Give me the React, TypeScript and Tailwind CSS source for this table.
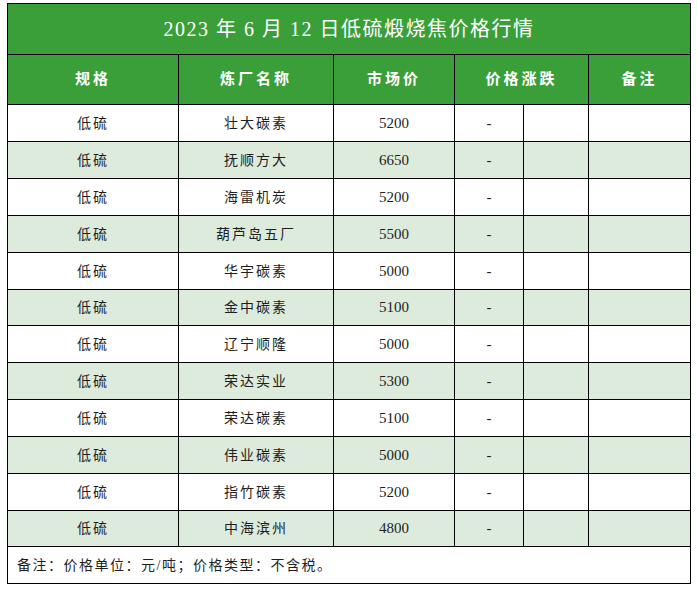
import React from 'react';

interface Row {
  spec: string;
  plant: string;
  price: string;
}

const rows: Row[] = [
  { spec: '低硫', plant: '壮大碳素', price: '5200' },
  { spec: '低硫', plant: '抚顺方大', price: '6650' },
  { spec: '低硫', plant: '海雷机炭', price: '5200' },
  { spec: '低硫', plant: '葫芦岛五厂', price: '5500' },
  { spec: '低硫', plant: '华宇碳素', price: '5000' },
  { spec: '低硫', plant: '金中碳素', price: '5100' },
  { spec: '低硫', plant: '辽宁顺隆', price: '5000' },
  { spec: '低硫', plant: '荣达实业', price: '5300' },
  { spec: '低硫', plant: '荣达碳素', price: '5100' },
  { spec: '低硫', plant: '伟业碳素', price: '5000' },
  { spec: '低硫', plant: '指竹碳素', price: '5200' },
  { spec: '低硫', plant: '中海滨州', price: '4800' },
];

const font = { fontFamily: '"Liberation Serif", "Noto Sans CJK SC", serif' };

export default function App() {
  return (
    <div className="w-[697px] h-[592px] bg-white pt-[3px] pl-[7px]" style={font}>
      <table className="table-fixed border-collapse w-[683px] text-[#1f1f1f]">
        <colgroup>
          <col className="w-[171px]" />
          <col className="w-[155px]" />
          <col className="w-[121px]" />
          <col className="w-[69px]" />
          <col className="w-[65px]" />
          <col className="w-[102px]" />
        </colgroup>
        <thead>
          <tr className="h-[51px] bg-[#3a9f38]">
            <th
              colSpan={6}
              className="border border-black text-white text-[20px] font-normal tracking-[1.5px] text-center"
            >
              2023 年 6 月 12 日低硫煅烧焦价格行情
            </th>
          </tr>
          <tr className="h-[50px] bg-[#3a9f38] text-white text-[15px] font-bold tracking-[3px]">
            <th className="border border-black">规格</th>
            <th className="border border-black">炼厂名称</th>
            <th className="border border-black">市场价</th>
            <th colSpan={2} className="border border-black">价格涨跌</th>
            <th className="border border-black">备注</th>
          </tr>
        </thead>
        <tbody>
          {rows.map((r, i) => (
            <tr
              key={i}
              className={`${i % 6 === 5 ? 'h-[36px]' : 'h-[37px]'} ${i % 2 === 1 ? 'bg-[#dcebdc]' : 'bg-white'}`}
            >
              <td className="border border-black text-center text-[14px] tracking-[2px]">{r.spec}</td>
              <td className="border border-black text-center text-[14px] tracking-[2px]">{r.plant}</td>
              <td className="border border-black text-center text-[15px]">{r.price}</td>
              <td className="border border-black text-center text-[15px]">-</td>
              <td className="border border-black"></td>
              <td className="border border-black"></td>
            </tr>
          ))}
          <tr className="h-[37px]">
            <td colSpan={6} className="border border-black pl-[9px] text-[14px] tracking-[1.5px]">
              备注：价格单位：元/吨；价格类型：不含税。
            </td>
          </tr>
        </tbody>
      </table>
    </div>
  );
}
